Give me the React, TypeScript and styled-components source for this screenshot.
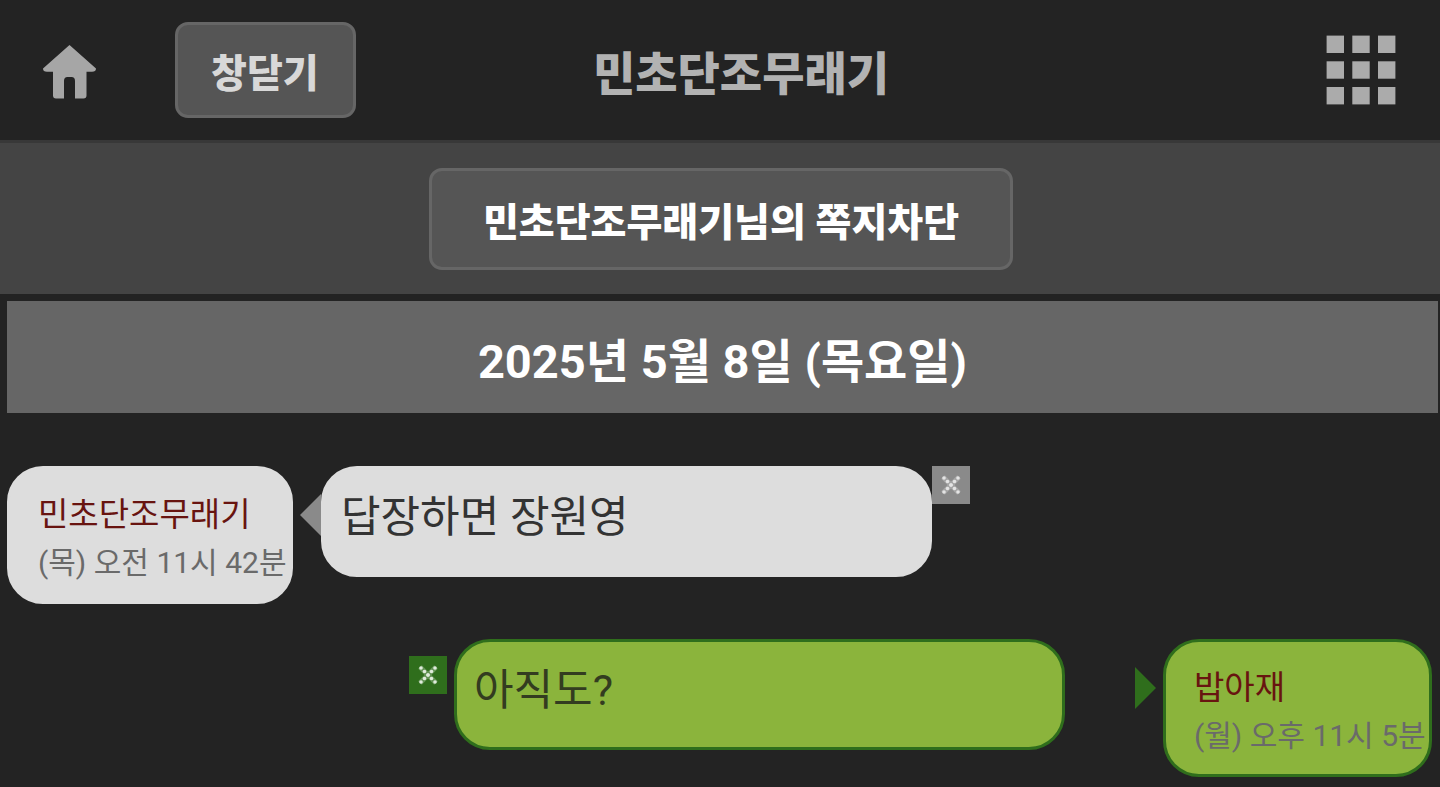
import React from "react";
import styled, { createGlobalStyle } from "styled-components";

const GlobalStyle = createGlobalStyle`
  * { box-sizing: border-box; }
  html, body { margin: 0; background: #232323; }
  body {
    min-height: 100vh;
    overflow-x: hidden;
    font-family: Roboto, "Noto Sans CJK KR", sans-serif;
    color: #333;
  }
  button { font-family: inherit; cursor: pointer; }
`;

const Header = styled.header`
  display: grid;
  grid-template-columns: 1fr auto 1fr;
  align-items: center;
  height: 143px;
  padding-left: 42px;
  border-bottom: 3px solid #383838;
`;

const HeaderStart = styled.div`
  display: flex;
  align-items: center;
  gap: 78px;
`;

const IconLink = styled.a`
  display: block;
  padding-top: 4px;
  line-height: 0;
  color: #a6a6a6;
`;

const MenuButton = styled.button`
  justify-self: end;
  margin-right: 44px;
  padding: 0;
  border: 0;
  background: none;
  line-height: 0;
  color: #ababab;
`;

const Title = styled.h1`
  margin: 0;
  padding-top: 8px;
  font-size: 46px;
  line-height: 56px;
  font-weight: 900;
  color: #b2b2b2;
  white-space: nowrap;
`;

const PanelButton = styled.button<{ $wide?: boolean }>`
  height: ${(p) => (p.$wide ? 102 : 96)}px;
  padding: ${(p) => (p.$wide ? "8px 51px 0" : "8px 34px 0 33px")};
  border: 3px solid #666;
  border-radius: 13px;
  background: #555;
  color: ${(p) => (p.$wide ? "#fff" : "#d8d8d8")};
  font-size: 39px;
  line-height: 48px;
  font-weight: 900;
  white-space: nowrap;
`;

const ActionBar = styled.section`
  display: flex;
  justify-content: center;
  padding: 25px 0 24px 2px;
  background: #444;
`;

const DateBar = styled.h2`
  margin: 7px 2px 53px 7px;
  padding: 33px 0 23px;
  background: #666;
  color: #fff;
  font-size: 47px;
  line-height: 56px;
  font-weight: 700;
  text-align: center;
`;

const Row = styled.article<{ $mine?: boolean }>`
  display: flex;
  flex-direction: ${(p) => (p.$mine ? "row-reverse" : "row")};
  align-items: flex-start;
  padding: 0 8px 0 7px;

  & + & {
    margin-top: 35px;
  }
`;

const Bubble = styled.div<{ $mine?: boolean }>`
  border: 3px solid ${(p) => (p.$mine ? "#2f6e1c" : "#ddd")};
  border-radius: 36px;
  background: ${(p) => (p.$mine ? "#8bb43c" : "#ddd")};
  color: ${(p) => (p.$mine ? "#333c20" : "#333")};
  white-space: nowrap;
`;

const Sender = styled(Bubble)`
  flex: none;
  width: ${(p) => (p.$mine ? 269 : 286)}px;
  height: 138px;
  padding: 22px 0 0 28px;
`;

const Name = styled.div`
  font-size: 33px;
  line-height: 48px;
  color: #681410;
`;

const Time = styled.time`
  display: block;
  font-size: 30px;
  line-height: 48px;
  color: #6a6a6a;
`;

const Message = styled(Bubble)`
  flex: 0 1 611px;
  height: 111px;
  padding: 20px 17px;
  font-size: 43px;
  line-height: 56px;
  margin-right: ${(p) => (p.$mine ? 70 : 0)}px;
`;

const Pointer = styled.div<{ $mine?: boolean }>`
  flex: none;
  width: 21px;
  height: 42px;
  margin: ${(p) => (p.$mine ? "28px 7px 0 0" : "28px 0 0 7px")};
  background: ${(p) => (p.$mine ? "#2f6e1c" : "#8a8a8a")};
  clip-path: ${(p) =>
    p.$mine ? "polygon(0 0, 100% 50%, 0 100%)" : "polygon(100% 0, 0 50%, 100% 100%)"};
`;

const DeleteButton = styled.button<{ $mine?: boolean }>`
  flex: none;
  width: 38px;
  height: 38px;
  padding: 0;
  border: 0;
  line-height: 0;
  margin: ${(p) => (p.$mine ? "17px 7px 0 0" : "0")};
  background: ${(p) => (p.$mine ? "#2f6e1c" : "#8a8a8a")};
  color: ${(p) => (p.$mine ? "#e0ecdc" : "#e4e4e4")};
`;

const HomeIcon = () => (
  <svg width="55" height="56" viewBox="0 0 55 56" fill="currentColor" aria-hidden="true">
    <path d="M27.5 1 54 24.5Q54 27.700 50 27.700H44.500V51.500Q44.500 54.500 41.500 54.500H33V37Q33 33 29.500 33H25.500Q22 33 22 37V54.500H14Q11 54.500 11 51.500V27.700H5Q1 27.700 1 24.500Z" />
  </svg>
);

const GridIcon = () => (
  <svg width="70" height="70" viewBox="0 0 70 70" fill="currentColor" aria-hidden="true">
    {[0.6, 26.3, 52].map((y) =>
      [0.6, 26.3, 52].map((x) => <rect key={`${x}-${y}`} x={x} y={y} width="17.4" height="17.4" />)
    )}
  </svg>
);

const CrossIcon = () => (
  <svg width="38" height="38" viewBox="0 0 38 38" fill="currentColor" aria-hidden="true">
    <path d="M11 11 27 27M27 11 11 27" stroke="currentColor" strokeWidth="5" opacity="0.3" />
    {[12, 15.5, 19, 22.5, 26].map((p) => (
      <React.Fragment key={p}>
        <circle cx={p} cy={p} r="1.8" />
        <circle cx={38 - p} cy={p} r="1.8" />
      </React.Fragment>
    ))}
  </svg>
);

type Note = { name: string; time: string; text: string; mine?: boolean };

const notes: Note[] = [
  { name: "민초단조무래기", time: "(목) 오전 11시 42분", text: "답장하면 장원영" },
  { name: "밥아재", time: "(월) 오후 11시 5분", text: "아직도?", mine: true },
];

export default function App() {
  return (
    <>
      <GlobalStyle />
      <Header>
        <HeaderStart>
          <IconLink href="#" aria-label="홈">
            <HomeIcon />
          </IconLink>
          <PanelButton type="button">창닫기</PanelButton>
        </HeaderStart>
        <Title>민초단조무래기</Title>
        <MenuButton type="button" aria-label="메뉴">
          <GridIcon />
        </MenuButton>
      </Header>
      <main>
        <ActionBar>
          <PanelButton type="button" $wide>
            민초단조무래기님의 쪽지차단
          </PanelButton>
        </ActionBar>
        <DateBar>2025년 5월 8일 (목요일)</DateBar>
        {notes.map((n) => (
          <Row key={n.name} $mine={n.mine}>
            <Sender $mine={n.mine}>
              <Name>{n.name}</Name>
              <Time>{n.time}</Time>
            </Sender>
            <Pointer $mine={n.mine} />
            <Message $mine={n.mine}>{n.text}</Message>
            <DeleteButton type="button" $mine={n.mine} aria-label="삭제">
              <CrossIcon />
            </DeleteButton>
          </Row>
        ))}
      </main>
    </>
  );
}
